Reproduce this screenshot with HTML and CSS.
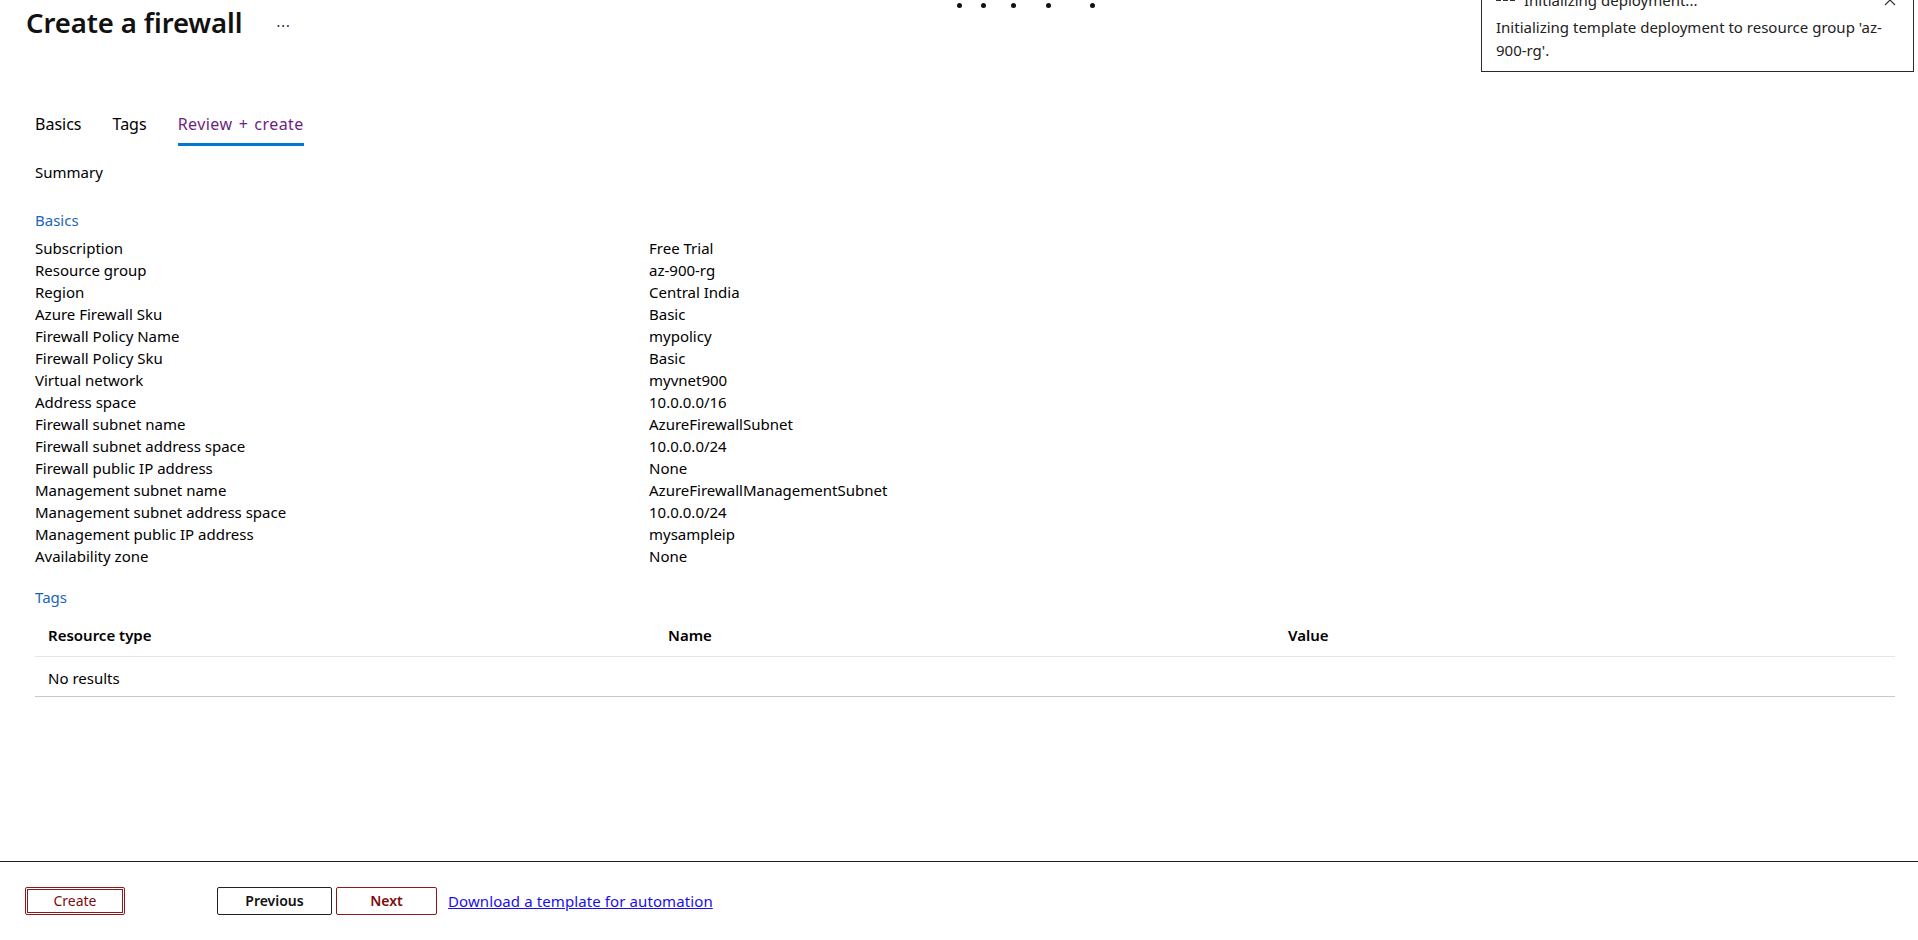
FILE: index.html
```html
<!DOCTYPE html>
<html lang="en">
<head>
<meta charset="utf-8">
<title>Create a firewall</title>
<link rel="stylesheet" href="styles.css">
</head>
<body>
<div class="page">
  <header class="title-bar">
    <h1 class="title">Create a firewall</h1>
    <span class="more">&middot;&middot;&middot;</span>
  </header>
  <div class="loading-dots">
    <span class="dot d1"></span><span class="dot d2"></span><span class="dot d3"></span><span class="dot d4"></span><span class="dot d5"></span>
  </div>
  <nav class="tabs">
    <span class="tab">Basics</span>
    <span class="tab">Tags</span>
    <span class="tab active">Review + create</span>
  </nav>
  <main class="content">
    <div class="summary">Summary</div>
    <div class="section-title first">Basics</div>
    <div class="kv">
      <div class="k">Subscription</div><div class="v">Free Trial</div>
      <div class="k">Resource group</div><div class="v">az-900-rg</div>
      <div class="k">Region</div><div class="v">Central India</div>
      <div class="k">Azure Firewall Sku</div><div class="v">Basic</div>
      <div class="k">Firewall Policy Name</div><div class="v">mypolicy</div>
      <div class="k">Firewall Policy Sku</div><div class="v">Basic</div>
      <div class="k">Virtual network</div><div class="v">myvnet900</div>
      <div class="k">Address space</div><div class="v">10.0.0.0/16</div>
      <div class="k">Firewall subnet name</div><div class="v">AzureFirewallSubnet</div>
      <div class="k">Firewall subnet address space</div><div class="v">10.0.0.0/24</div>
      <div class="k">Firewall public IP address</div><div class="v">None</div>
      <div class="k">Management subnet name</div><div class="v">AzureFirewallManagementSubnet</div>
      <div class="k">Management subnet address space</div><div class="v">10.0.0.0/24</div>
      <div class="k">Management public IP address</div><div class="v">mysampleip</div>
      <div class="k">Availability zone</div><div class="v">None</div>
    </div>
    <div class="section-title tags-title">Tags</div>
    <div class="grid">
      <div class="grid-row head">
        <div class="cell">Resource type</div>
        <div class="cell">Name</div>
        <div class="cell">Value</div>
      </div>
      <div class="grid-row body">
        <div class="cell">No results</div>
      </div>
    </div>
  </main>
  <footer class="footer">
    <button class="btn btn-create">Create</button>
    <div class="nav-buttons">
      <button class="btn btn-prev">Previous</button>
      <button class="btn btn-next">Next</button>
      <a class="template-link" href="#">Download a template for automation</a>
    </div>
  </footer>
</div>
<div class="toast">
  <div class="toast-head">
    <span class="toast-icon"><span></span><span></span><span></span></span>
    <span class="toast-title">Initializing deployment...</span>
    <svg class="toast-close" width="12" height="12" viewBox="0 0 12 12"><path d="M1 1 L11 11 M11 1 L1 11" stroke="#333" stroke-width="1.2" fill="none"/></svg>
  </div>
  <div class="toast-body">Initializing template deployment to resource group 'az-900-rg'.</div>
</div>
</body>
</html>
```
FILE: styles.css
```css
* { box-sizing: border-box; }
html, body { margin: 0; padding: 0; }
body {
  font-family: "Noto Sans", "Open Sans", sans-serif;
  color: #000;
  background: #fff;
  overflow: hidden;
}
.page {
  position: relative;
  display: flex;
  flex-direction: column;
  height: 940px;
}
.title-bar {
  display: flex;
  align-items: center;
  padding: 5px 0 0 26px;
  height: 41px;
}
.title {
  margin: 0;
  font-size: 27.5px;
  font-weight: 600;
  line-height: 34px;
  letter-spacing: -0.1px;
  color: #111;
}
.more {
  margin-left: 34px;
  font-size: 14px;
  letter-spacing: 1px;
  color: #222;
  padding-top: 4px;
}
.loading-dots {
  position: absolute;
  top: 3px;
  left: 957px;
  width: 140px;
  height: 5px;
}
.dot {
  position: absolute;
  top: 0;
  width: 5px;
  height: 5px;
  border-radius: 50%;
  background: #111;
}
.d1 { left: 0; }
.d2 { left: 24px; }
.d3 { left: 54px; }
.d4 { left: 89px; }
.d5 { left: 133px; }
.tabs {
  display: flex;
  gap: 31px;
  padding: 70px 0 0 35px;
  height: 109px;
}
.tab {
  font-size: 16px;
  line-height: 26px;
  height: 35px;
  color: #000;
}
.tab.active {
  color: #6e1f7e;
  letter-spacing: 0.45px;
  word-spacing: 1.5px;
  border-bottom: 3px solid #0078d4;
}
.content {
  flex: 1;
  padding: 0 23px 0 35px;
  font-size: 15px;
}
.summary {
  margin-top: 11px;
  line-height: 22px;
}
.section-title {
  color: #1a66b8;
  line-height: 22px;
}
.section-title.first { margin-top: 26px; margin-bottom: 6px; }
.section-title.tags-title { margin-top: 19px; }
.kv {
  display: grid;
  grid-template-columns: 614px 1fr;
  line-height: 22px;
}
.k, .v { height: 22px; white-space: nowrap; }
.grid {
  margin-top: 5px;
  width: 1860px;
}
.grid-row {
  display: grid;
  grid-template-columns: 620px 620px 620px;
}
.grid-row.head {
  height: 44px;
  align-items: center;
  font-weight: 600;
  font-size: 15px;
  border-bottom: 1px solid #e6e6e6;
}
.grid-row.body {
  height: 40px;
  align-items: center;
  padding-top: 2px;
  font-size: 15px;
  border-bottom: 1px solid #c8c8c8;
}
.cell { padding-left: 13px; }
.footer {
  border-top: 1px solid #222;
  height: 79px;
  display: flex;
  align-items: center;
  padding: 0 0 1px 25px;
}
.btn {
  font-family: "Noto Sans", "Open Sans", sans-serif;
  font-size: 14px;
  height: 28px;
  background: #fff;
  border-radius: 2px;
  padding: 0;
  cursor: pointer;
}
.btn-create {
  width: 100px;
  color: #7a0d0d;
  border: 3px double #8b1a1a;
}
.nav-buttons {
  display: flex;
  align-items: center;
  gap: 4px;
  margin-left: 92px;
}
.btn-prev {
  width: 115px;
  font-weight: 600;
  color: #111;
  border: 1px solid #222;
}
.btn-next {
  width: 101px;
  font-weight: 600;
  color: #7a0d0d;
  border: 1px solid #8b1a1a;
}
.template-link {
  margin-left: 7px;
  font-size: 15px;
  letter-spacing: 0.1px;
  color: #1a0dee;
  text-decoration: underline;
}
.toast {
  position: absolute;
  top: -14px;
  left: 1481px;
  width: 433px;
  height: 86px;
  border: 1px solid #2b2b2b;
  background: #fff;
  padding: 0 14px 0 14px;
}
.toast-head {
  display: flex;
  align-items: center;
  height: 26px;
  font-size: 15px;
}
.toast-icon {
  display: flex;
  gap: 2px;
  width: 28px;
}
.toast-icon span {
  width: 5px;
  height: 2px;
  background: #333;
}
.toast-title { flex: 1; color: #222; }
.toast-close { margin-right: 3px; }
.toast-body {
  font-size: 15px;
  line-height: 23px;
  color: #222;
  padding-top: 3px;
  padding-right: 6px;
}
```
